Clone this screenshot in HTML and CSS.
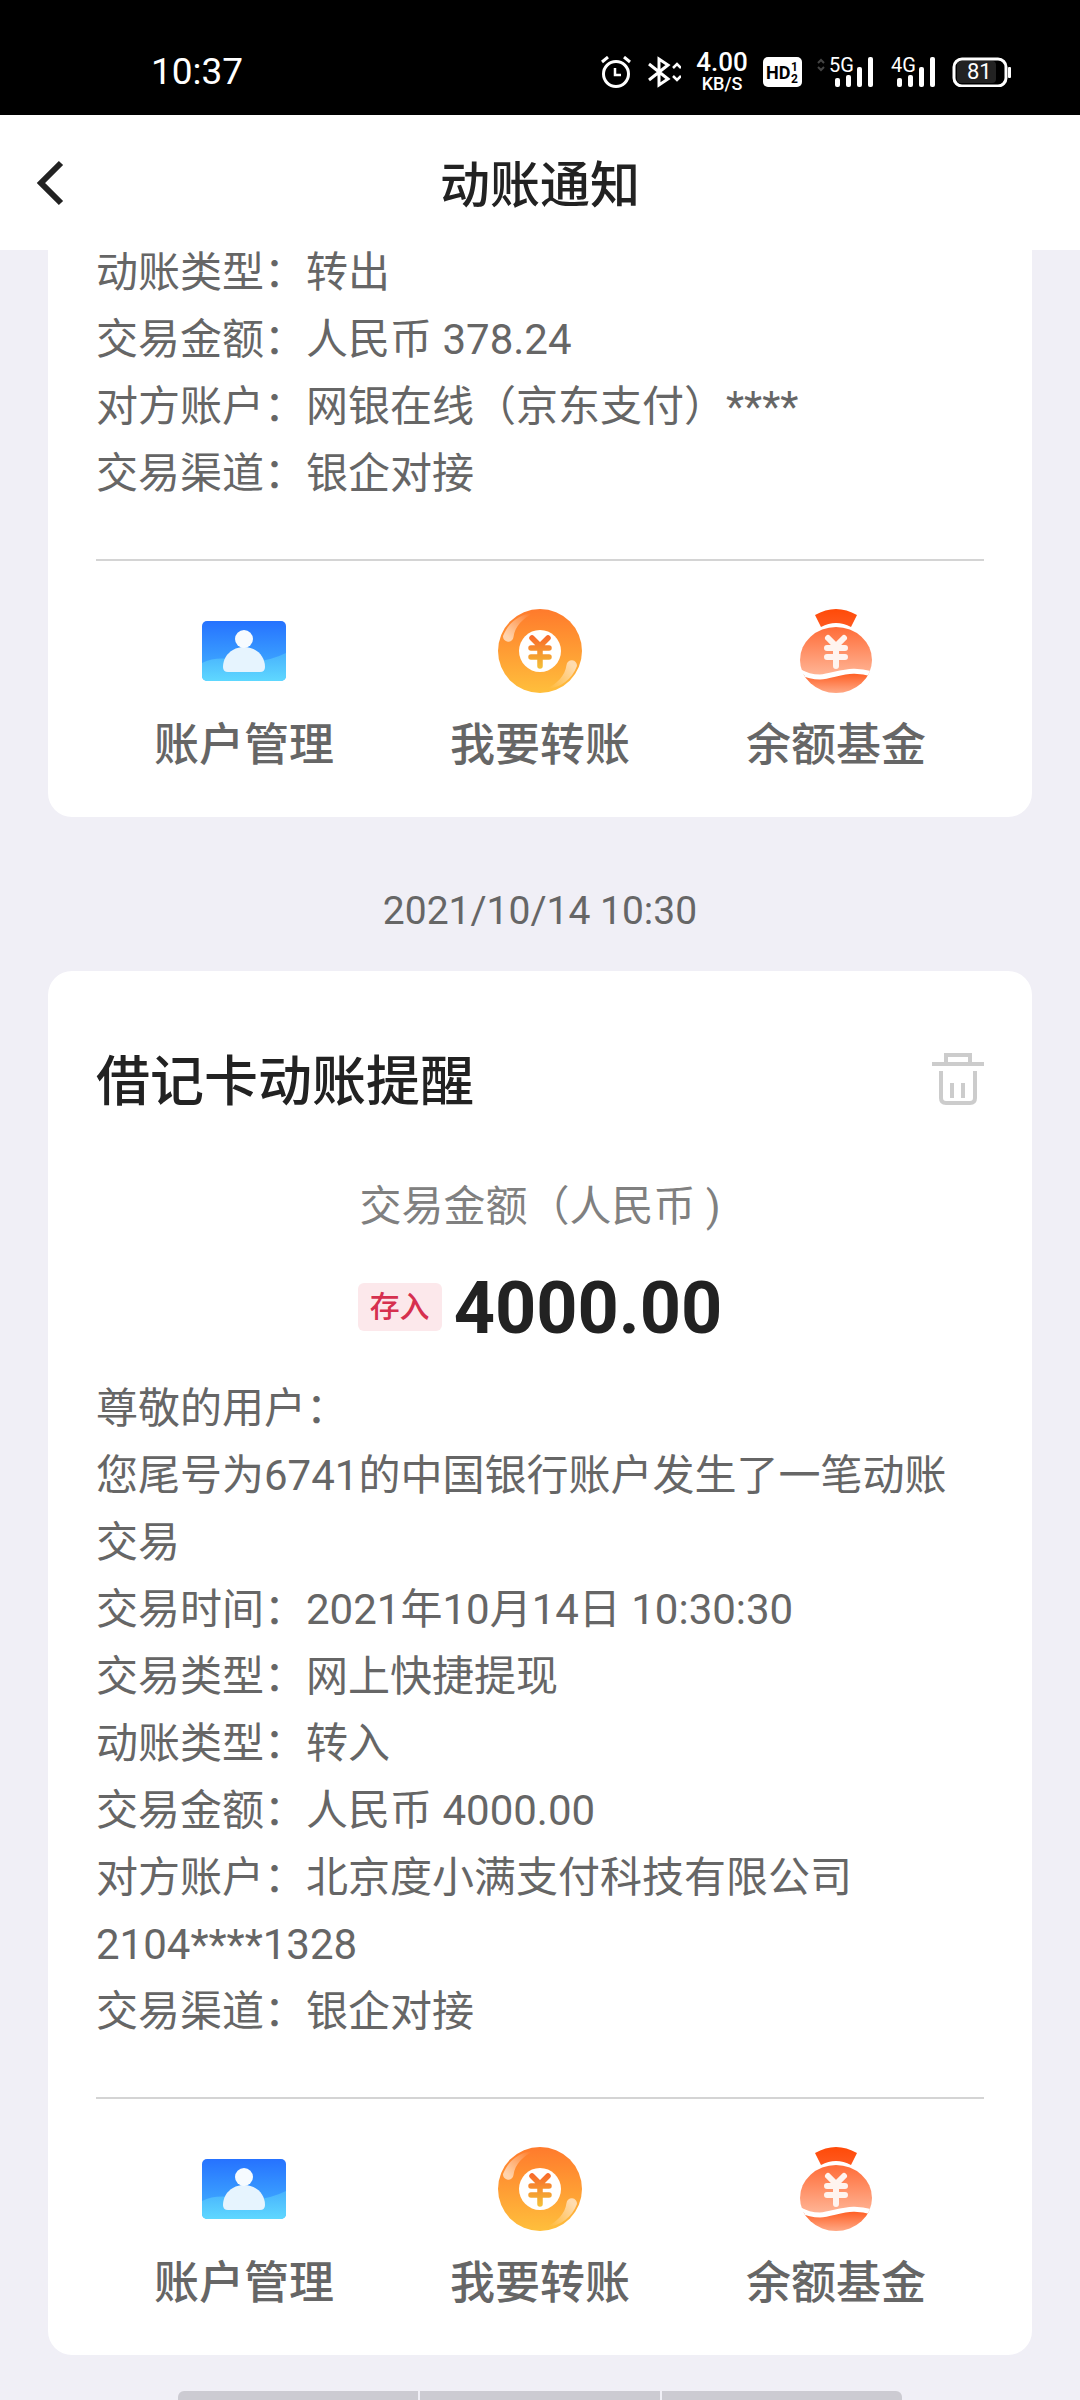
FILE: index.html
```html
<!DOCTYPE html>
<html lang="zh-CN">
<head>
<meta charset="utf-8">
<meta name="viewport" content="width=device-width, initial-scale=1">
<title>动账通知</title>
<link rel="stylesheet" href="styles.css">
</head>
<body>
<svg class="sprite" aria-hidden="true">
  <defs>
    <linearGradient id="blue" x1="0" y1="0" x2="0" y2="1"><stop offset="0" stop-color="#2672ff"/><stop offset="1" stop-color="#45b8ff"/></linearGradient>
    <linearGradient id="sky" gradientUnits="userSpaceOnUse" x1="0" y1="44" x2="0" y2="72"><stop offset="0" stop-color="#48b2fd"/><stop offset="1" stop-color="#5fd8ff"/></linearGradient>
    <linearGradient id="gold" x1="0" y1="0" x2="0" y2="1"><stop offset="0" stop-color="#ff7a2c"/><stop offset="1" stop-color="#ffbf3c"/></linearGradient>
    <linearGradient id="yuan-gold" gradientUnits="userSpaceOnUse" x1="0" y1="26" x2="0" y2="60"><stop offset="0" stop-color="#f8672a"/><stop offset="1" stop-color="#f3c236"/></linearGradient>
    <linearGradient id="shine-a" gradientUnits="userSpaceOnUse" x1="10" y1="28" x2="34" y2="6"><stop offset="0" stop-color="#fff" stop-opacity=".6"/><stop offset="1" stop-color="#fff" stop-opacity="0"/></linearGradient>
    <linearGradient id="shine-b" gradientUnits="userSpaceOnUse" x1="74" y1="56" x2="50" y2="78"><stop offset="0" stop-color="#fff" stop-opacity=".6"/><stop offset="1" stop-color="#fff" stop-opacity="0"/></linearGradient>
    <linearGradient id="neck" x1="0" y1="0" x2="0" y2="1"><stop offset="0" stop-color="#ff4a08"/><stop offset="1" stop-color="#ff5a20"/></linearGradient>
    <linearGradient id="bag-top" gradientUnits="userSpaceOnUse" x1="0" y1="18" x2="0" y2="66"><stop offset="0" stop-color="#ff6c38"/><stop offset="1" stop-color="#ffb495"/></linearGradient>
    <linearGradient id="bag-low" gradientUnits="userSpaceOnUse" x1="0" y1="62" x2="0" y2="84"><stop offset="0" stop-color="#ff5517"/><stop offset="1" stop-color="#ffa986"/></linearGradient>
    <clipPath id="bag-clip"><ellipse cx="42" cy="51" rx="36" ry="33"/></clipPath>
  </defs>
  <symbol id="icon-account" viewBox="0 0 84 84">
    <rect y="12" width="84" height="60" rx="5" fill="url(#blue)"/>
    <path d="M0 54Q14 47 34 51Q60 56 84 44V67a5 5 0 0 1-5 5H5a5 5 0 0 1-5-5Z" fill="url(#sky)"/>
    <path d="M42 38C54 38 63 47 63 58Q63 63 58 63H26Q21 63 21 58C21 47 30 38 42 38Z" fill="#e6f4fe"/>
    <circle cx="42" cy="30" r="9" fill="#f6fbff"/>
  </symbol>
  <symbol id="icon-transfer" viewBox="0 0 84 84">
    <circle cx="42" cy="42" r="42" fill="url(#gold)"/>
    <path d="M5 27C10 14 21 5 36 4C25 9 17 17 15.500 28A5 5 0 0 1 5 27Z" fill="url(#shine-a)"/>
    <path d="M79 57C74 70 63 79 48 80C59 75 67 67 68.500 56A5 5 0 0 1 79 57Z" fill="url(#shine-b)"/>
    <circle cx="42" cy="42" r="21" fill="#fff"/>
    <path d="M34 29L42 37L50 29M33 39H51M33 48H51M42 37V57" fill="none" stroke="url(#yuan-gold)" stroke-width="5.500" stroke-linecap="round"/>
  </symbol>
  <symbol id="icon-fund" viewBox="0 0 84 84">
    <path d="M21 6Q42 -6 63 6L57 18Q42 10 27 18Z" fill="url(#neck)"/>
    <g clip-path="url(#bag-clip)">
      <path d="M0 10H84V70C64 54 44 66 26 67Q14 67 0 56Z" fill="url(#bag-top)"/>
      <path d="M0 60Q12 69 26 69C44 69 62 54 84 70V84H0Z" fill="url(#bag-low)"/>
      <path d="M0 59Q12 68 26 68C43 67 56 56 84 67" fill="none" stroke="#fff" stroke-width="5"/>
    </g>
    <path d="M34 29L42 37L50 29M33 39H51M33 48H51M42 37V57" fill="none" stroke="#fff4ef" stroke-width="6" stroke-linecap="round"/>
  </symbol>
</svg>

<div class="status">
  <time class="status-time">10:37</time>
  <div class="status-icons">
    <svg width="30" height="32" viewBox="0 0 30 32" fill="none" stroke="#fff" stroke-width="3" aria-label="闹钟">
      <circle cx="15" cy="18" r="12.500"/><path d="M1 6L7 1M23 1L29 6"/><path d="M14 12V19H20" stroke-width="2.500"/>
    </svg>
    <svg width="35" height="32" viewBox="0 0 35 32" fill="none" stroke="#fff" stroke-width="3" aria-label="蓝牙">
      <path d="M3 8L22 23L13 29V3L22 9L3 24"/><path d="M27 12L31 8L35 12M27 20L31 24L35 20" stroke-width="2.500"/>
    </svg>
    <div class="speed"><span class="speed-value">4.00</span><span class="speed-unit">KB/S</span></div>
    <svg class="hd" width="39" height="30" viewBox="0 0 39 30" aria-label="HD">
      <rect width="39" height="30" rx="5" fill="#fff"/>
      <text x="3" y="22" font-size="18">HD</text><text x="28" y="14" font-size="12">1</text><text x="28" y="26" font-size="12">2</text>
    </svg>
    <svg class="signal" width="59" height="46" viewBox="0 -8 59 46" aria-label="5G">
      <path d="M1 6L4 3L7 6M1 10L4 13L7 10" fill="none" stroke="#444" stroke-width="2"/>
      <text x="12" y="15">5G</text>
      <rect x="18" y="21" width="5" height="9" rx="2"/><rect x="29" y="18" width="5" height="12" rx="2"/><rect x="40" y="10" width="5" height="20" rx="2"/><rect x="51" width="5" height="30" rx="2"/>
    </svg>
    <svg class="signal" width="46" height="46" viewBox="0 -8 46 46" aria-label="4G">
      <text x="0" y="15">4G</text>
      <rect x="6" y="21" width="5" height="9" rx="2"/><rect x="17" y="18" width="5" height="12" rx="2"/><rect x="28" y="10" width="5" height="20" rx="2"/><rect x="39" width="5" height="30" rx="2"/>
    </svg>
    <svg class="battery" width="59" height="30" viewBox="0 0 59 30" aria-label="电量">
      <rect x="5" y="4" width="39" height="22" rx="4" fill="#222"/>
      <rect x="2" y="2" width="52" height="27" rx="8" fill="none" stroke="#fff" stroke-width="3"/>
      <rect x="56" y="10" width="3" height="11" rx="1" fill="#fff"/>
      <text x="15" y="22">81</text>
    </svg>
  </div>
</div>

<header class="header">
  <button class="back" type="button" aria-label="返回">
    <svg width="28" height="46" viewBox="0 0 28 46" fill="none" stroke="#222" stroke-width="6"><path d="M25 3L5 23L25 43"/></svg>
  </button>
  <h1 class="header-title">动账通知</h1>
</header>

<main class="feed">
  <article class="card card-scrolled">
    <div class="detail">
      <p>动账类型：转出</p>
      <p>交易金额：人民币 378.24</p>
      <p>对方账户：网银在线（京东支付）****</p>
      <p>交易渠道：银企对接</p>
    </div>
    <div class="actions">
      <button class="action" type="button"><svg class="action-icon" aria-hidden="true"><use href="#icon-account"/></svg>账户管理</button>
      <button class="action" type="button"><svg class="action-icon" aria-hidden="true"><use href="#icon-transfer"/></svg>我要转账</button>
      <button class="action" type="button"><svg class="action-icon" aria-hidden="true"><use href="#icon-fund"/></svg>余额基金</button>
    </div>
  </article>

  <time class="date">2021/10/14 10:30</time>

  <article class="card">
    <div class="card-head">
      <h2 class="card-title">借记卡动账提醒</h2>
      <button class="delete" type="button" aria-label="删除">
        <svg width="52" height="54" viewBox="0 0 52 54" fill="none" stroke="#ccc" stroke-width="4"><path d="M0 11H52M14 11V2H38V11M9 18V45Q9 50 14 50H38Q43 50 43 45V18M20 30V45M31 30V45"/></svg>
      </button>
    </div>
    <p class="amount-label">交易金额（人民币 )</p>
    <div class="amount"><span class="badge">存入</span><strong class="amount-value">4000.00</strong></div>
    <div class="detail">
      <p>尊敬的用户：</p>
      <p>您尾号为6741的中国银行账户发生了一笔动账交易</p>
      <p>交易时间：2021年10月14日 10:30:30</p>
      <p>交易类型：网上快捷提现</p>
      <p>动账类型：转入</p>
      <p>交易金额：人民币 4000.00</p>
      <p>对方账户：北京度小满支付科技有限公司 2104****1328</p>
      <p>交易渠道：银企对接</p>
    </div>
    <div class="actions">
      <button class="action" type="button"><svg class="action-icon" aria-hidden="true"><use href="#icon-account"/></svg>账户管理</button>
      <button class="action" type="button"><svg class="action-icon" aria-hidden="true"><use href="#icon-transfer"/></svg>我要转账</button>
      <button class="action" type="button"><svg class="action-icon" aria-hidden="true"><use href="#icon-fund"/></svg>余额基金</button>
    </div>
  </article>
</main>

<div class="gesture" aria-hidden="true"><span></span><span></span><span></span></div>
</body>
</html>
```
FILE: styles.css
```css
* { box-sizing: border-box; }

body {
  margin: 0;
  background: #f0eff6;
  color: #666;
  font-family: Roboto, "Noto Sans CJK SC", sans-serif;
  font-size: 42px;
}

h1, h2, p { margin: 0; }

button {
  padding: 0;
  border: 0;
  background: none;
  color: inherit;
  font: inherit;
}

svg { display: block; flex: none; }

.sprite { position: absolute; width: 0; height: 0; }

/* Status bar */
.status {
  position: relative;
  z-index: 1;
  display: flex;
  align-items: center;
  justify-content: space-between;
  height: 115px;
  padding: 28px 69px 0 151px;
  background: #000;
  color: #fff;
}

.status-time { font-size: 37px; line-height: 44px; }

.status-icons { display: flex; align-items: center; gap: 15px; }

.speed {
  display: flex;
  flex-direction: column;
  align-items: center;
  width: 52px;
  font-weight: 500;
}

.speed-value { font-size: 26px; line-height: 23px; }
.speed-unit { font-size: 18px; line-height: 19px; }

.hd { font-weight: 700; fill: #000; }
.signal { font-size: 20px; fill: #fff; }
.battery { font-size: 22px; fill: #fff; }

/* Title bar */
.header {
  position: relative;
  z-index: 1;
  display: grid;
  grid-template-columns: 1fr auto 1fr;
  align-items: center;
  height: 135px;
  padding: 0 36px;
  background: #fff;
  color: #222;
}

.back { justify-self: start; }

.header-title { padding-top: 6px; font-size: 50px; font-weight: 500; line-height: 72px; }

/* Notification cards */
.feed { padding: 0 48px; }

.card {
  padding: 76px 48px 41px;
  border-radius: 24px;
  background: #fff;
}

/* The first card is scrolled partly under the title bar */
.card-scrolled {
  margin-top: -11px;
  padding-top: 0;
  border-top-left-radius: 0;
  border-top-right-radius: 0;
}

.date {
  display: block;
  padding: 64px 0 30px;
  font-size: 39px;
  line-height: 60px;
  text-align: center;
}

.card-head {
  display: flex;
  align-items: flex-start;
  justify-content: space-between;
  color: #222;
}

.card-title { font-size: 54px; font-weight: 500; line-height: 72px; }

.delete { padding-top: 6px; }

.amount-label {
  margin-top: 58px;
  color: #808080;
  line-height: 60px;
  text-align: center;
}

.amount {
  display: flex;
  align-items: center;
  justify-content: center;
  gap: 12px;
  margin: 26px 0 24px;
}

.badge {
  padding: 0 12px;
  border-radius: 6px;
  background: #fce8eb;
  color: #d6304f;
  font-size: 30px;
  font-weight: 500;
  line-height: 48px;
}

.amount-value {
  padding-top: 4px;
  color: #222;
  font-size: 72px;
  font-weight: 700;
  line-height: 84px;
}

.detail { line-height: 67px; }

.actions {
  display: grid;
  grid-template-columns: repeat(3, 1fr);
  margin-top: 52px;
  padding-top: 48px;
  border-top: 2px solid #d4d4d4;
}

.action {
  display: flex;
  flex-direction: column;
  align-items: center;
  gap: 23px;
  font-size: 45px;
  font-weight: 500;
  line-height: 60px;
}

.action-icon { width: 84px; height: 84px; }

/* System gesture bar, three segments */
.gesture {
  display: grid;
  grid-template-columns: repeat(3, 1fr);
  gap: 2px;
  height: 9px;
  margin: 36px 178px 0;
  overflow: hidden;
  border-radius: 6px 6px 0 0;
}

.gesture span { background: #cccbd2; }
```
